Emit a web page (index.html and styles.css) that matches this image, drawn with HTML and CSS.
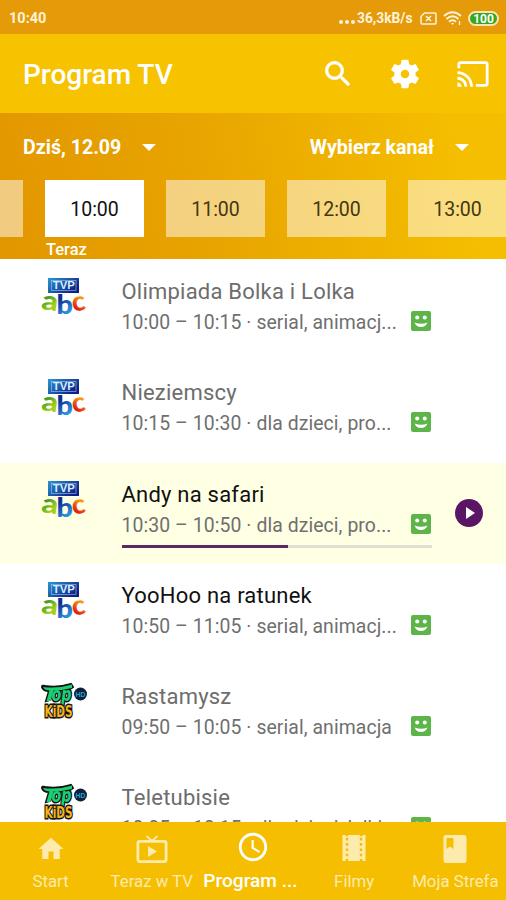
FILE: index.html
```html
<!DOCTYPE html>
<html lang="pl">
<head>
  <meta charset="UTF-8" />
  <meta name="viewport" content="width=device-width, initial-scale=1.0"/>
  <title>Program TV</title>
  <link rel="stylesheet" href="styles.css">
</head>
<body>

<!-- Shared icons -->
<svg class="sprite" width="0" height="0">
  <defs>
    <linearGradient id="tvp" x1="0" y1="0" x2="1" y2="0.6">
      <stop offset="0" stop-color="#2c97d2"/>
      <stop offset="1" stop-color="#0d1f86"/>
    </linearGradient>
    <linearGradient id="leaf" x1="0" y1="0" x2="0.6" y2="1">
      <stop offset="0.3" stop-color="#118a2c"/>
      <stop offset="0.8" stop-color="#a4cf1c"/>
    </linearGradient>
    <linearGradient id="sea" x1="0" y1="0" x2="0.4" y2="1">
      <stop offset="0.4" stop-color="#0c2c92"/>
      <stop offset="0.9" stop-color="#2b8fdc"/>
    </linearGradient>
    <linearGradient id="fire" x1="0.4" y1="0" x2="0" y2="1">
      <stop offset="0.3" stop-color="#f79a12"/>
      <stop offset="0.7" stop-color="#e5190f"/>
    </linearGradient>
  </defs>
  <symbol id="abc" viewBox="0 0 46 40">
    <rect x="7" y="1" width="31" height="15" fill="url(#tvp)"/>
    <rect x="10.5" y="3.5" width="24.5" height="10" fill="none" stroke="#a9c8ec" stroke-width="0.6"/>
    <text class="logo-tvp" x="11.800" y="12" textLength="22" lengthAdjust="spacingAndGlyphs">TVP</text>
    <text class="logo-abc" transform="rotate(8 8 27)" x="0.500" y="33" textLength="16.500" lengthAdjust="spacingAndGlyphs" fill="url(#leaf)">a</text>
    <text class="logo-abc" x="15.500" y="36.500" textLength="16.500" lengthAdjust="spacingAndGlyphs" fill="url(#sea)">b</text>
    <text class="logo-abc" transform="rotate(-8 38 27)" x="31" y="33.500" textLength="13.500" lengthAdjust="spacingAndGlyphs" fill="url(#fire)">c</text>
  </symbol>
  <symbol id="topkids" viewBox="0 0 46 40">
    <path d="M1 5 Q1 3 4 4 Q17 6 30 2 L32 5 Q28 9 12 9 L9 18 L5 19 L8 9 Q2 9 1 5Z" fill="#111" stroke="#111" stroke-width="2"/>
    <text class="logo-top" x="10.500" y="18.500" textLength="20" lengthAdjust="spacingAndGlyphs">op</text>
    <path d="M2 5 Q17 7 31 2.500 L31 6 Q20 8.500 12.500 8.500 L9.500 19 L5.500 19 L8.500 8.500 Q3 8 2 5Z" fill="#19d173"/>
    <text class="logo-kids" x="3.500" y="35" textLength="28" lengthAdjust="spacingAndGlyphs">KiDS</text>
    <circle cx="39.500" cy="12" r="6.500" fill="#0b2238"/>
    <text class="logo-hd" x="39.500" y="14.700" text-anchor="middle">HD</text>
  </symbol>
  <symbol id="smile" viewBox="0 0 20 20">
    <rect width="20" height="20" rx="2" fill="#5db54a"/>
    <circle cx="6.200" cy="6.400" r="2" fill="#fff"/>
    <circle cx="13.800" cy="6.400" r="2" fill="#fff"/>
    <path d="M3.500 11.500 Q10 14 16.500 11.500 Q14.500 16 10 16 Q5.500 16 3.500 11.500Z" fill="#fff"/>
  </symbol>
</svg>

<div class="phone">
  <div class="status-bar">
    <span>10:40</span>
    <div class="status-right">
      <span class="dots"><i></i><i></i><i></i></span>
      <span class="speed">36,3kB/s</span>
      <svg class="sim" width="17" height="13" viewBox="0 0 17 13" fill="none" stroke="#fff3da" stroke-width="1.500">
        <path d="M4.500 1 H15 Q16 1 16 2 V11 Q16 12 15 12 H2 Q1 12 1 11 V4.500Z"/>
        <path d="M6 4 L11 9 M11 4 L6 9"/>
      </svg>
      <svg class="wifi" width="19" height="15" viewBox="0 0 19 15" fill="none" stroke="#fff3da" stroke-width="1.900">
        <path d="M1 5 Q9.500 -2.500 18 5"/>
        <path d="M3.500 8 Q9.500 2.500 15.500 8"/>
        <path d="M6 10.800 Q9.500 7.500 13 10.800"/>
        <path d="M8 12 H11 L9.500 14Z" fill="#fff3da" stroke="none"/>
        <path d="M16.500 10 V14" stroke-width="1.300"/>
      </svg>
      <span class="battery">100</span>
    </div>
  </div>

  <header class="app-bar">
    <h1>Program TV</h1>
    <svg class="search" width="34" height="34" viewBox="0 0 24 24" fill="#fff" stroke="#fff" stroke-width="0.4"><path d="M15.500 14h-.79l-.28-.27A6.471 6.471 0 0 0 16 9.500 6.500 6.500 0 1 0 9.500 16c1.610 0 3.090-.59 4.230-1.570l.27.280v.79l5 4.990L20.490 19l-4.990-5zm-6 0C7.010 14 5 11.990 5 9.500S7.010 5 9.500 5 14 7.010 14 9.500 11.990 14 9.500 14z"/></svg>
    <svg class="gear" width="34" height="34" viewBox="0 0 24 24" fill="#fff"><path d="M19.430 12.980c.04-.32.07-.64.07-.98s-.03-.66-.07-.98l2.110-1.650c.19-.15.240-.42.120-.64l-2-3.460c-.12-.22-.39-.3-.61-.22l-2.490 1c-.52-.4-1.080-.73-1.690-.98l-.38-2.650C14.460 2.180 14.250 2 14 2h-4c-.25 0-.46.180-.49.420l-.38 2.650c-.61.250-1.170.590-1.690.980l-2.490-1c-.23-.09-.49 0-.61.220l-2 3.460c-.13.220-.07.490.120.640l2.110 1.650c-.04.320-.07.650-.07.980s.03.660.070.980l-2.110 1.650c-.19.150-.24.420-.12.640l2 3.460c.12.220.390.300.610.220l2.490-1c.52.400 1.080.730 1.690.980l.38 2.650c.03.240.240.420.490.420h4c.25 0 .46-.18.490-.42l.38-2.650c.61-.25 1.170-.59 1.690-.98l2.490 1c.23.090.49 0 .61-.22l2-3.460c.12-.22.070-.49-.12-.64l-2.110-1.650zM12 15c-1.650 0-3-1.350-3-3s1.350-3 3-3 3 1.350 3 3-1.350 3-3 3z"/></svg>
    <svg class="cast" width="34" height="34" viewBox="0 0 24 24" fill="#fff"><path d="M21 3H3c-1.100 0-2 .9-2 2v3h2V5h18v14h-7v2h7c1.100 0 2-.9 2-2V5c0-1.100-.9-2-2-2zM1 18v3h3c0-1.660-1.340-3-3-3zm0-4v2c2.760 0 5 2.240 5 5h2c0-3.870-3.130-7-7-7zm0-4v2c4.970 0 9 4.030 9 9h2c0-6.080-4.930-11-11-11z"/></svg>
  </header>

  <section class="filters">
    <div class="selects">
      <div class="select">Dziś, 12.09<span class="caret"></span></div>
      <div class="select">Wybierz kanał<span class="caret"></span></div>
    </div>
    <div class="hours">
      <div class="hour"></div>
      <div class="hour active">10:00</div>
      <div class="hour">11:00</div>
      <div class="hour">12:00</div>
      <div class="hour">13:00</div>
    </div>
    <div class="now">Teraz</div>
  </section>

  <main class="list">
    <article class="item past">
      <svg class="logo"><use href="#abc"/></svg>
      <div class="info">
        <h2>Olimpiada Bolka i Lolka</h2>
        <div class="meta"><p>10:00 – 10:15 · serial, animacj...</p><svg class="smile"><use href="#smile"/></svg></div>
      </div>
    </article>
    <article class="item past">
      <svg class="logo"><use href="#abc"/></svg>
      <div class="info">
        <h2>Nieziemscy</h2>
        <div class="meta"><p>10:15 – 10:30 · dla dzieci, pro...</p><svg class="smile"><use href="#smile"/></svg></div>
      </div>
    </article>
    <article class="item current">
      <svg class="logo"><use href="#abc"/></svg>
      <div class="info">
        <h2>Andy na safari</h2>
        <div class="meta"><p>10:30 – 10:50 · dla dzieci, pro...</p><svg class="smile"><use href="#smile"/></svg></div>
        <div class="progress"><div class="progress-fill" style="width: 53.7%"></div></div>
      </div>
      <svg class="play" width="28" height="28" viewBox="0 0 28 28">
        <circle cx="14" cy="14" r="14" fill="#5a1564"/>
        <path d="M11 8 L20 14 L11 20Z" fill="#fff"/>
      </svg>
    </article>
    <article class="item">
      <svg class="logo"><use href="#abc"/></svg>
      <div class="info">
        <h2>YooHoo na ratunek</h2>
        <div class="meta"><p>10:50 – 11:05 · serial, animacj...</p><svg class="smile"><use href="#smile"/></svg></div>
      </div>
    </article>
    <article class="item past">
      <svg class="logo"><use href="#topkids"/></svg>
      <div class="info">
        <h2>Rastamysz</h2>
        <div class="meta"><p>09:50 – 10:05 · serial, animacja</p><svg class="smile"><use href="#smile"/></svg></div>
      </div>
    </article>
    <article class="item past">
      <svg class="logo"><use href="#topkids"/></svg>
      <div class="info">
        <h2>Teletubisie</h2>
        <div class="meta"><p>10:05 – 10:15 · dla dzieci, lalki</p><svg class="smile"><use href="#smile"/></svg></div>
      </div>
    </article>
  </main>

  <nav class="bottom-nav">
    <a class="tab">
      <svg width="30" height="30" viewBox="0 0 24 24" fill="currentColor"><path d="M10 20v-6h4v6h5v-8h3L12 3 2 12h3v8z"/></svg>
      <span>Start</span>
    </a>
    <a class="tab">
      <svg width="34" height="30" viewBox="0 0 34 30" fill="none" stroke="currentColor" stroke-width="2.800">
        <rect x="2.900" y="7.400" width="28.200" height="20.200" rx="2"/>
        <path d="M11.500 2 L17 7 L22.500 2" stroke-width="1.800"/>
        <path d="M13 12 L22 17.500 L13 23Z" fill="currentColor" stroke="none"/>
      </svg>
      <span>Teraz w TV</span>
    </a>
    <a class="tab selected">
      <svg width="34" height="34" viewBox="0 0 24 24" fill="currentColor"><path d="M11.990 2C6.470 2 2 6.480 2 12s4.470 10 9.990 10C17.520 22 22 17.520 22 12S17.520 2 11.990 2zM12 20c-4.420 0-8-3.580-8-8s3.580-8 8-8 8 3.580 8 8-3.580 8-8 8zm.5-13H11v6l5.250 3.150.75-1.230-4.500-2.670z"/></svg>
      <span>Program ...</span>
    </a>
    <a class="tab">
      <svg width="24" height="28" viewBox="0 0 24 28">
        <rect x="0.500" y="1" width="23" height="26" fill="currentColor"/>
        <g stroke="#f6be00" stroke-width="2.400" stroke-dasharray="2.600 2.700">
          <path d="M5 3.800 V26 M19 3.800 V26"/>
        </g>
        <path d="M3.500 1 H6 V2.200 H3.500Z M18 1 H20.500 V2.200 H18Z M3.500 25.800 H6 V27 H3.500Z M18 25.800 H20.500 V27 H18Z" fill="#f6be00"/>
      </svg>
      <span>Filmy</span>
    </a>
    <a class="tab">
      <svg width="24" height="30" viewBox="0 0 24 30">
        <path fill-rule="evenodd" fill="currentColor" d="M3 1 H21 Q23.500 1 23.500 3.500 V26.500 Q23.500 29 21 29 H3 Q0.500 29 0.500 26.500 V3.500 Q0.500 1 3 1Z M3.500 4 V15 L7 12.500 L10.500 15 V4Z"/>
      </svg>
      <span>Moja Strefa</span>
    </a>
  </nav>
</div>

</body>
</html>
```
FILE: styles.css
```css
* {
  box-sizing: border-box;
}

body {
  margin: 0;
  font-family: Roboto, "Liberation Sans", sans-serif;
  background: #fff;
}

h1, h2, p {
  margin: 0;
  font-weight: 400;
  white-space: nowrap;
}

svg {
  display: block;
  flex: none;
}

.sprite {
  position: absolute;
}

.phone {
  width: 506px;
  height: 900px;
  display: flex;
  flex-direction: column;
  overflow: hidden;
}

/* Status bar */
.status-bar {
  height: 34px;
  flex: none;
  display: flex;
  justify-content: space-between;
  align-items: center;
  padding: 2px 7px 0 9px;
  background: #e59a09;
  color: #fff3da;
  font-size: 14.5px;
  font-weight: 700;
}

.status-right {
  display: flex;
  align-items: center;
}

.dots {
  display: flex;
  gap: 2px;
  margin: 8px 2px 0 0;
}

.dots i {
  width: 4px;
  height: 4px;
  border-radius: 50%;
  background: #fff3da;
}

.speed {
  width: 55px;
  font-size: 13.8px;
  white-space: nowrap;
}

.sim {
  margin-left: 8px;
}

.wifi {
  margin-left: 6px;
}

.battery {
  width: 31px;
  height: 15px;
  margin-left: 6px;
  border: 2px solid #fbe3b4;
  border-radius: 8px;
  background: #35a81f;
  color: #fff;
  font-size: 12px;
  line-height: 12px;
  text-align: center;
}

/* App bar */
.app-bar {
  height: 79px;
  flex: none;
  display: flex;
  align-items: center;
  padding: 0 16px 0 23px;
  background: #f7c200;
}

.app-bar h1 {
  flex: 1;
  padding-top: 2px;
  color: #fff;
  font-size: 28px;
  font-weight: 500;
}

.gear {
  margin: 0 34px 0 33px;
}

/* Day, channel and hour filters */
.filters {
  height: 146px;
  flex: none;
  overflow: hidden;
  background: linear-gradient(78deg, #e29600, #e8a400 40%, #f5be00 90%);
  color: #fff;
}

.selects {
  height: 67px;
  display: flex;
  justify-content: space-between;
  padding: 2px 37px 0 23px;
}

.select {
  display: flex;
  align-items: center;
  gap: 21px;
  font-size: 19.6px;
  font-weight: 700;
}

.caret {
  border: 7px solid transparent;
  border-top-color: #fff;
  border-bottom: 0;
}

.hours {
  display: flex;
  gap: 22px;
  margin-left: -76px;
}

.hour {
  width: 99px;
  height: 57px;
  flex: none;
  display: flex;
  align-items: center;
  justify-content: center;
  padding-top: 1px;
  background: rgba(255, 255, 255, 0.5);
  color: #443710;
  font-size: 19.5px;
}

.hour.active {
  background: #fff;
  color: #111;
}

.now {
  margin: 3px 0 0 46px;
  font-size: 16.5px;
  font-weight: 500;
  line-height: 19px;
}

/* Programme list */
.list {
  flex: 1;
  min-height: 0;
  overflow: hidden;
  padding-top: 1px;
}

.item {
  height: 101.3px;
  display: flex;
  padding: 18px 23px 0 41px;
}

.current {
  background: #ffffe4;
}

.logo {
  width: 46px;
  height: 40px;
  margin: -1px 34.5px 0 0;
}

.info {
  width: 310px;
}

.info h2 {
  color: #111;
  font-size: 22px;
  line-height: 28px;
  letter-spacing: 0.22px;
}

.past h2 {
  color: #6d6d6d;
}

.meta {
  display: flex;
  justify-content: space-between;
  align-items: center;
  height: 33px;
  color: #6f6f6f;
  font-size: 19.4px;
  letter-spacing: 0.08px;
}

.smile {
  width: 20px;
  height: 20px;
  margin: 0 1px 3px 0;
}

.progress {
  height: 3px;
  margin-top: 3px;
  background: #e0dfd0;
}

.progress-fill {
  height: 100%;
  background: #5d2860;
}

.play {
  margin: 18px 0 0 auto;
}

/* Channel logos */
.logo-tvp {
  font-family: "Liberation Sans", sans-serif;
  font-size: 10px;
  font-weight: 700;
  fill: #dcecff;
}

.logo-abc {
  font-family: Lato, sans-serif;
  font-size: 27px;
  font-weight: 900;
}

.logo-top,
.logo-kids {
  font-family: "DejaVu Sans", sans-serif;
  font-weight: 700;
  stroke: #111;
  stroke-width: 3px;
  paint-order: stroke;
}

.logo-top {
  font-size: 19px;
  font-style: italic;
  fill: #19d173;
}

.logo-kids {
  font-size: 16px;
  fill: #f6b51a;
}

.logo-hd {
  font-family: "Liberation Sans", sans-serif;
  font-size: 7px;
  font-weight: 700;
  fill: #2b9bd6;
}

/* Bottom navigation */
.bottom-nav {
  height: 78px;
  flex: none;
  display: grid;
  grid-template-columns: repeat(5, 101.2px);
  background: #f6be00;
}

.tab {
  display: flex;
  flex-direction: column;
  align-items: center;
  justify-content: space-between;
  padding: 12px 0 9px;
  color: #fdebae;
  font-size: 16.8px;
  line-height: 20px;
  white-space: nowrap;
}

.selected {
  padding: 8px 5px 9px 0;
  color: #fff;
  font-size: 19.1px;
  font-weight: 500;
}

.selected svg {
  margin-left: 5px;
}
```
